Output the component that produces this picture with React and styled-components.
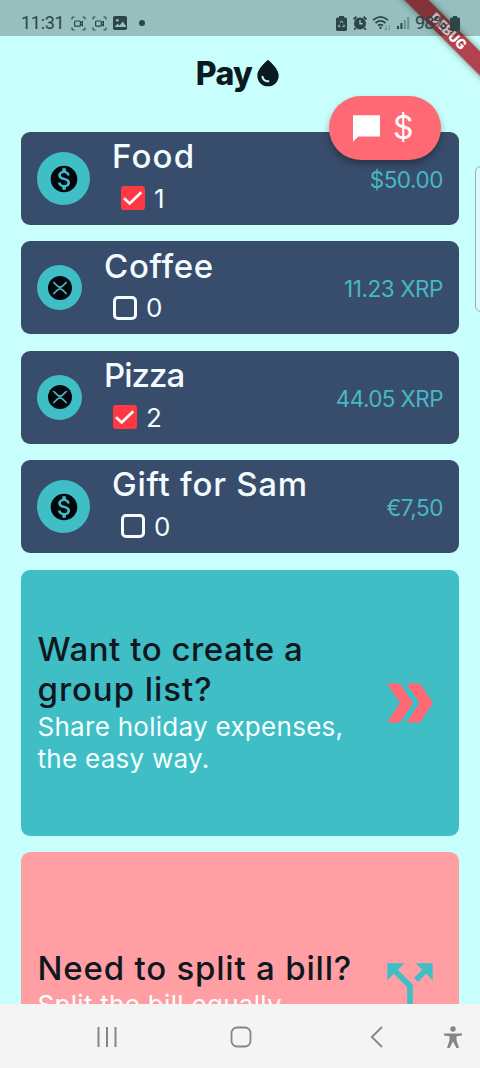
import React from 'react';
import styled, { createGlobalStyle } from 'styled-components';
import { MdCallSplit, MdMonetizationOn, MdWaterDrop } from 'react-icons/md';

const GlobalStyle = createGlobalStyle`
  * { box-sizing: border-box; }
  body { margin: 0; background: #c8fffc; overflow: hidden; }
`;

const Screen = styled.div`
  position: relative;
  display: flex;
  flex-direction: column;
  width: 480px;
  height: 1068px;
  overflow: hidden;
  background: #c8fffc;
  font-family: Inter, 'Liberation Sans', sans-serif;
`;

const StatusBar = styled.div`
  position: relative;
  z-index: 3;
  flex: none;
  display: flex;
  align-items: center;
  justify-content: space-between;
  height: 36px;
  padding: 10px 20.5px 0 21px;
  background: rgba(0, 0, 0, 0.25);
  color: #2b4548;
  font: 400 18px/24px Roboto, sans-serif;
`;

const StatusGroup = styled.div`
  display: flex;
  align-items: center;
  gap: ${({ $gap }) => $gap}px;
`;

const Clock = styled.span`
  width: 42px;
  margin-right: 2px;
  white-space: nowrap;
  letter-spacing: -0.3px;
`;

const Dot = styled.i`
  width: 6px;
  height: 6px;
  margin-left: 6px;
  border-radius: 50%;
  background: currentColor;
`;

const Percent = styled.span`
  width: 30px;
  letter-spacing: -0.8px;
`;

const DebugBanner = styled.div`
  position: absolute;
  z-index: 2;
  top: 23px;
  right: -48px;
  width: 160px;
  height: 17px;
  transform: rotate(45deg);
  background: #b0434c;
  box-shadow: 0 0 6px rgba(0, 0, 0, 0.5);
  color: #fff;
  text-align: center;
  font: 900 14px/17px Roboto, sans-serif;
`;

const Header = styled.header`
  flex: none;
  display: flex;
  justify-content: center;
  align-items: center;
  height: 96px;
  padding: 0 0 22px 0;
  color: #0b1a1f;
  font-size: 32px;
  font-weight: 800;
  letter-spacing: -0.6px;
`;

const List = styled.main`
  flex: 1;
  min-height: 0;
  display: flex;
  flex-direction: column;
  gap: 16.4px;
  padding: 0 21px;
  overflow: hidden;
`;

const Row = styled.article`
  flex: none;
  display: flex;
  align-items: center;
  height: 93px;
  padding: 0 16px;
  border-radius: 9px;
  background: #384d6b;
`;

const Avatar = styled.div`
  display: grid;
  place-items: center;
  width: ${({ $size }) => $size}px;
  height: ${({ $size }) => $size}px;
  border-radius: 50%;
  background: #3fbec6;
  color: #02060d;
`;

const Details = styled.div`
  flex: 1;
  align-self: stretch;
  padding: 4.3px 0 0 22px;
`;

const Title = styled.h2`
  margin: 0;
  color: ${({ $dark }) => ($dark ? '#10171f' : '#f3fbff')};
  font-size: 33px;
  font-weight: 500;
  line-height: 40px;
  letter-spacing: ${({ $track = 0 }) => $track}px;
  white-space: nowrap;
`;

const TitleLine = styled.span`
  display: block;
  letter-spacing: ${({ $track }) => $track}px;
`;

const Checked = styled.div`
  display: flex;
  align-items: center;
  gap: 9px;
  padding-left: 9px;
  margin-top: 6px;
  height: 32px;
  color: #f3fbff;
  font-size: 26px;
  font-weight: 400;
`;

const Box = styled.span`
  display: grid;
  place-items: center;
  width: 24px;
  height: 24px;
  border: ${({ $on }) => ($on ? 'none' : '3px solid #f3fbff')};
  border-radius: ${({ $on }) => ($on ? 3 : 5)}px;
  background: ${({ $on }) => ($on ? '#ff3844' : 'transparent')};
`;

const Amount = styled.span`
  color: #45b9c3;
  font-size: 22.5px;
  letter-spacing: ${({ $track = 0 }) => $track}px;
  white-space: nowrap;
  padding-top: 2px;
`;

const Promo = styled.section`
  flex: none;
  display: flex;
  align-items: center;
  justify-content: space-between;
  height: 266.5px;
  padding: 0 ${({ $right }) => $right}px 0 16.5px;
  border-radius: 9px;
  background: ${({ $color }) => $color};
`;

const PromoText = styled.div`
  padding-bottom: 2px;
`;

const Blurb = styled.p`
  margin: 1.5px 0 0;
  color: #f6ffff;
  font-size: 26px;
  line-height: 32px;
  letter-spacing: ${({ $track = 0 }) => $track}px;
  white-space: nowrap;
`;

const Fab = styled.button`
  position: absolute;
  z-index: 2;
  top: 96px;
  left: 329px;
  display: flex;
  align-items: center;
  gap: 12px;
  width: 112px;
  height: 64px;
  padding: 0 0 0 22px;
  border: 0;
  border-radius: 32px;
  background: #ff6974;
  color: #fff;
  box-shadow: 0 4px 7px rgba(0, 0, 0, 0.32);
  font: 400 32px/36px Inter, sans-serif;
`;

const EdgeHandle = styled.div`
  position: absolute;
  top: 166px;
  left: 475px;
  width: 12px;
  height: 146px;
  border: 1px solid #8fb5bb;
  border-radius: 6px;
  background: #d8fafa;
`;

const NavBar = styled.nav`
  flex: none;
  display: grid;
  grid-template-columns: 173px 136px 135px 36px;
  align-items: center;
  height: 64px;
  padding-top: 2px;
  background: #f4f4f4;
  color: #85858a;
`;

const NavSlot = styled.div`
  display: flex;
  justify-content: ${({ $align = 'center' }) => $align};
  padding-left: ${({ $left = 0 }) => $left}px;
`;

function RecordIcon() {
  return (
    <svg width="15" height="15" viewBox="0 0 15 15" fill="none" stroke="currentColor" strokeWidth="1.2">
      <path d="M1 3.500V2.200Q1 1 2.200 1h1.300M11.500 1h1.300Q14 1 14 2.200v1.300M14 11.500v1.300q0 1.200-1.200 1.200h-1.300M3.500 14H2.200Q1 14 1 12.800v-1.300" />
      <rect x="3.600" y="5" width="5.800" height="5.200" rx="1" />
      <path d="M9.400 7l2-1.400v4l-2-1.400" />
    </svg>
  );
}

function PictureIcon() {
  return (
    <svg width="14" height="14" viewBox="0 0 14 14">
      <rect width="14" height="14" rx="1.800" fill="currentColor" />
      <circle cx="4.300" cy="4.300" r="1.400" fill="#96bfbd" />
      <path d="M1.300 11l3.200-3.300 2 1.900 3.200-4.100 3.200 4.200V11z" fill="#96bfbd" />
    </svg>
  );
}

function AlarmIcon() {
  return (
    <svg width="16" height="16" viewBox="0 0 16 16" fill="none" stroke="currentColor" strokeWidth="1.800">
      <circle cx="8" cy="8.500" r="6" fill="currentColor" stroke="none" />
      <path d="M1.500 4.300l3-2.500M14.500 4.300l-3-2.500M3.500 13l-1.200 1.700M12.500 13l1.200 1.700" />
      <path d="M8 5v3.700h2.800" stroke="#96bfbd" strokeWidth="1.400" />
    </svg>
  );
}

function WifiIcon() {
  return (
    <svg width="20" height="16" viewBox="0 0 20 16" fill="none" stroke="currentColor" strokeWidth="1.700">
      <path d="M1 5.200Q8.500-1.500 16 5.200M3.500 8q5-4.300 10 0M6 10.600q2.500-2 5 0" />
      <circle cx="8.500" cy="12.700" r="1.200" fill="currentColor" stroke="none" />
      <path d="M14 10v5M12.500 13.500l1.500 1.500 1.500-1.500M17.500 15v-5" strokeWidth="1" opacity=".35" />
    </svg>
  );
}

function SignalIcon() {
  return (
    <svg width="14" height="14" viewBox="0 0 14 14" fill="currentColor">
      <rect x="0" y="10" width="2" height="3" />
      <rect x="3.400" y="7" width="2" height="6" />
      <rect x="6.800" y="4" width="2" height="9" opacity=".4" />
      <rect x="10.200" y="1" width="2" height="12" opacity=".4" />
    </svg>
  );
}

function BatterySaverIcon() {
  return (
    <svg width="11" height="15" viewBox="0 0 11 15">
      <path d="M3 0h5v1.500h1.500q1.500 0 1.500 1.500v10.500q0 1.500-1.500 1.500h-8Q0 15 0 13.500V3q0-1.500 1.500-1.500H3z" fill="currentColor" />
      <path d="M3.900 7L5.500 4.800 7 7M7.800 8.500l.7 2H6.500M4.500 10.500h-2l.7-2" fill="none" stroke="#96bfbd" strokeWidth="1" />
    </svg>
  );
}

function BatteryIcon() {
  return (
    <svg width="10" height="15" viewBox="0 0 10 15" fill="currentColor">
      <path d="M3 0h4v1.500h1.500Q10 1.500 10 3v10.500q0 1.500-1.500 1.500h-7Q0 15 0 13.500V3q0-1.500 1.500-1.500H3z" />
    </svg>
  );
}

function XrpIcon() {
  return (
    <svg width="24" height="24" viewBox="0 0 24 24">
      <circle cx="12" cy="12" r="12" fill="#02060d" />
      <path d="M5.300 6l4 3.900q2.700 2.500 5.400 0L18.700 6M5.300 18l4-3.900q2.700-2.500 5.400 0l4 3.900" fill="none" stroke="#4fb8c2" strokeWidth="1.700" />
    </svg>
  );
}

function CheckIcon() {
  return (
    <svg width="24" height="24" viewBox="0 0 24 24" fill="none" stroke="#fff" strokeWidth="2.600">
      <path d="M3 12.300l5.700 5.200L20.300 6.300" />
    </svg>
  );
}

function ChatIcon() {
  return (
    <svg width="30" height="28" viewBox="0 0 30 28" fill="currentColor">
      <path d="M2 1.200h27v21.300H7.300L2 27.800z" />
    </svg>
  );
}

function DoubleChevron() {
  return (
    <svg width="60" height="40" viewBox="0 0 60 40" fill="#ff6974">
      <path d="M2 .5h13L28 20 15 39.500H2L15 20zM21.500 .5h13.500L48 20 35 39.500H21.500L34.500 20z" />
    </svg>
  );
}

const expenses = [
  { name: 'Food', track: 1.2, on: true, count: 1, amount: '$50.00', amountTrack: -0.45 },
  { name: 'Coffee', track: 0.7, xrp: true, on: false, count: 0, amount: '11.23 XRP', amountTrack: -0.45 },
  { name: 'Pizza', track: -1, xrp: true, on: true, count: 2, amount: '44.05 XRP', amountTrack: -0.6 },
  { name: 'Gift for Sam', track: 0.75, on: false, count: 0, amount: '€7,50', amountTrack: -0.45 },
];

function ExpenseRow({ item }) {
  return (
    <Row>
      <Avatar $size={item.xrp ? 45 : 53}>
        {item.xrp ? <XrpIcon /> : <MdMonetizationOn size={32} />}
      </Avatar>
      <Details>
        <Title $track={item.track}>{item.name}</Title>
        <Checked>
          <Box $on={item.on}>{item.on && <CheckIcon />}</Box>
          {item.count}
        </Checked>
      </Details>
      <Amount $track={item.amountTrack}>{item.amount}</Amount>
    </Row>
  );
}

export default function App() {
  return (
    <Screen>
      <GlobalStyle />
      <StatusBar>
        <StatusGroup $gap={6}>
          <Clock>11:31</Clock>
          <RecordIcon />
          <RecordIcon />
          <PictureIcon />
          <Dot />
        </StatusGroup>
        <StatusGroup $gap={4.5}>
          <BatterySaverIcon />
          <AlarmIcon />
          <WifiIcon />
          <SignalIcon />
          <Percent>98%</Percent>
          <BatteryIcon />
        </StatusGroup>
      </StatusBar>
      <DebugBanner>DEBUG</DebugBanner>
      <Header>
        <span>Pay</span>
        <MdWaterDrop size={32} />
      </Header>
      <List>
        {expenses.map((item) => (
          <ExpenseRow key={item.name} item={item} />
        ))}
        <Promo $color="#3fbec6" $right={14}>
          <PromoText>
            <Title as="h3" $dark>
              <TitleLine $track={0.55}>Want to create a</TitleLine>
              <TitleLine $track={0.95}>group list?</TitleLine>
            </Title>
            <Blurb $track={0.28}>Share holiday expenses,<br />the easy way.</Blurb>
          </PromoText>
          <DoubleChevron />
        </Promo>
        <Promo $color="#ff9fa4" $right={15}>
          <PromoText>
            <Title as="h3" $dark $track={0.8}>Need to split a bill?</Title>
            <Blurb $track={0.3}>Split the bill equally.</Blurb>
          </PromoText>
          <MdCallSplit size={68} color="#3fbec6" />
        </Promo>
      </List>
      <NavBar>
        <NavSlot $left={40}>
          <svg width="20" height="22" viewBox="0 0 20 22" stroke="currentColor" strokeWidth="2">
            <path d="M1.500 1v20M10 1v20M18.500 1v20" />
          </svg>
        </NavSlot>
        <NavSlot>
          <svg width="22" height="22" viewBox="0 0 22 22" fill="none" stroke="currentColor" strokeWidth="1.800">
            <rect x="1.500" y="1.500" width="19" height="19" rx="5.500" />
          </svg>
        </NavSlot>
        <NavSlot>
          <svg width="13" height="22" viewBox="0 0 13 22" fill="none" stroke="currentColor" strokeWidth="1.800">
            <path d="M12 1L1.800 11 12 21" />
          </svg>
        </NavSlot>
        <NavSlot $align="flex-start">
          <svg width="18" height="23" viewBox="0 0 18 23" fill="currentColor">
            <circle cx="9" cy="3" r="2.700" />
            <path d="M0 7.500h18v2l-5.500 .8v3.900l2.500 7.800h-2.600L9 15.500 5.600 22H3l2.500-7.800v-3.900L0 9.500z" />
          </svg>
        </NavSlot>
      </NavBar>
      <Fab aria-label="Message payment">
        <ChatIcon />
        <span>$</span>
      </Fab>
      <EdgeHandle />
    </Screen>
  );
}
